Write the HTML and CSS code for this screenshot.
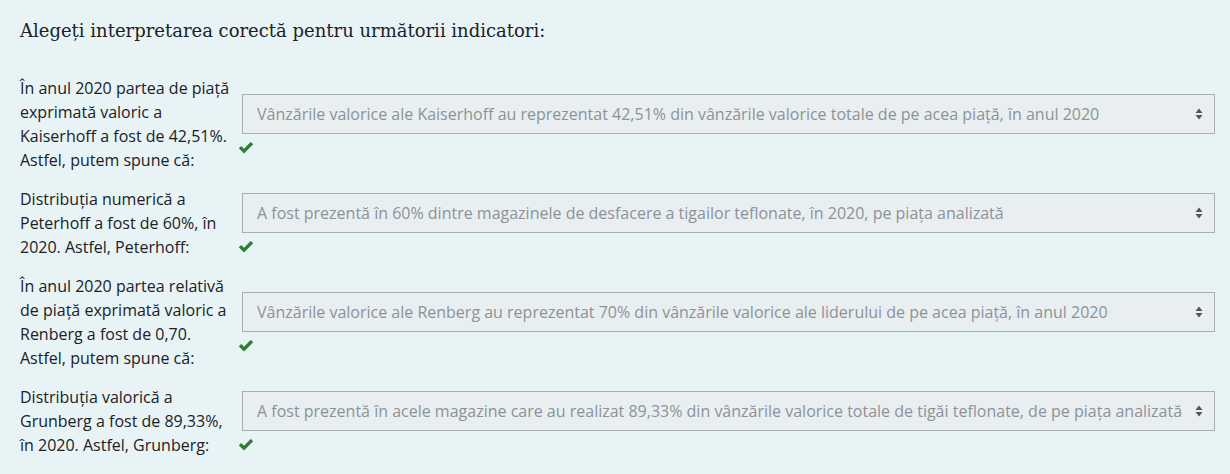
FILE: index.html
```html
<!DOCTYPE html>
<html lang="ro">
<head>
<meta charset="utf-8">
<link rel="stylesheet" href="styles.css">
</head>
<body>
<div class="panel">
  <h2 class="title">Alegeți interpretarea corectă pentru următorii indicatori:</h2>
  <div class="rows">
    <div class="row">
      <div class="label">În anul 2020 partea de piață exprimată valoric a Kaiserhoff a fost de 42,51%. Astfel, putem spune că:</div>
      <div class="control">
        <div class="select"><span class="val">Vânzările valorice ale Kaiserhoff au reprezentat 42,51% din vânzările valorice totale de pe acea piață, în anul 2020</span><svg class="arrows" width="8" height="12" viewBox="0 0 8 12"><path d="M4 0.5 L7.5 5 L0.5 5 Z M4 11.5 L7.5 7 L0.5 7 Z" fill="#555"/></svg></div>
        <svg class="check" width="16" height="12" viewBox="0 0 16 12"><path d="M0.8 6.3 L3.2 3.9 L6 6.7 L12.8 -0.1 L15.2 2.3 L6 11.5 Z" fill="#2e7d32"/></svg>
      </div>
    </div>
    <div class="row">
      <div class="label">Distribuția numerică a Peterhoff a fost de 60%, în 2020. Astfel, Peterhoff:</div>
      <div class="control">
        <div class="select"><span class="val">A fost prezentă în 60% dintre magazinele de desfacere a tigailor teflonate, în 2020, pe piața analizată</span><svg class="arrows" width="8" height="12" viewBox="0 0 8 12"><path d="M4 0.5 L7.5 5 L0.5 5 Z M4 11.5 L7.5 7 L0.5 7 Z" fill="#555"/></svg></div>
        <svg class="check" width="16" height="12" viewBox="0 0 16 12"><path d="M0.8 6.3 L3.2 3.9 L6 6.7 L12.8 -0.1 L15.2 2.3 L6 11.5 Z" fill="#2e7d32"/></svg>
      </div>
    </div>
    <div class="row">
      <div class="label">În anul 2020 partea relativă de piață exprimată valoric a Renberg a fost de 0,70. Astfel, putem spune că:</div>
      <div class="control">
        <div class="select"><span class="val">Vânzările valorice ale Renberg au reprezentat 70% din vânzările valorice ale liderului de pe acea piață, în anul 2020</span><svg class="arrows" width="8" height="12" viewBox="0 0 8 12"><path d="M4 0.5 L7.5 5 L0.5 5 Z M4 11.5 L7.5 7 L0.5 7 Z" fill="#555"/></svg></div>
        <svg class="check" width="16" height="12" viewBox="0 0 16 12"><path d="M0.8 6.3 L3.2 3.9 L6 6.7 L12.8 -0.1 L15.2 2.3 L6 11.5 Z" fill="#2e7d32"/></svg>
      </div>
    </div>
    <div class="row">
      <div class="label">Distribuția valorică a Grunberg a fost de 89,33%, în 2020. Astfel, Grunberg:</div>
      <div class="control">
        <div class="select"><span class="val">A fost prezentă în acele magazine care au realizat 89,33% din vânzările valorice totale de tigăi teflonate, de pe piața analizată</span><svg class="arrows" width="8" height="12" viewBox="0 0 8 12"><path d="M4 0.5 L7.5 5 L0.5 5 Z M4 11.5 L7.5 7 L0.5 7 Z" fill="#555"/></svg></div>
        <svg class="check" width="16" height="12" viewBox="0 0 16 12"><path d="M0.8 6.3 L3.2 3.9 L6 6.7 L12.8 -0.1 L15.2 2.3 L6 11.5 Z" fill="#2e7d32"/></svg>
      </div>
    </div>
  </div>
</div>
</body>
</html>
```

FILE: styles.css
```css
html, body {
  margin: 0;
  padding: 0;
  background: #e7f3f5;
}
.panel {
  width: 1230px;
  height: 474px;
  box-sizing: border-box;
  padding: 17px 15px 0 20px;
  background: #e7f3f5;
  font-family: "Open Sans", "Noto Sans", sans-serif;
  color: #1d2125;
}
.title {
  margin: 0 0 31px 0;
  font-family: "DejaVu Serif", Georgia, serif;
  font-weight: normal;
  font-size: 18px;
  line-height: 28px;
  color: #1d2125;
}
.rows {
  display: flex;
  flex-direction: column;
  gap: 15px;
}
.row {
  display: flex;
  align-items: center;
}
.label {
  width: 218px;
  flex: none;
  font-size: 16px;
  line-height: 24px;
}
.control {
  flex: 1;
  display: flex;
  flex-direction: column;
  align-items: flex-start;
  gap: 8px;
}
.select {
  margin-left: 4px;
  width: 973px;
  height: 40px;
  box-sizing: border-box;
  border: 1px solid #a8b0b3;
  background: #e9eef1;
  display: flex;
  align-items: center;
  justify-content: space-between;
  padding: 0 11px 0 14px;
  font-size: 16px;
  color: #8b9398;
  white-space: nowrap;
}
.val {
  overflow: hidden;
}
.arrows {
  flex: none;
  margin-left: 6px;
}
.check {
  display: block;
}
```
